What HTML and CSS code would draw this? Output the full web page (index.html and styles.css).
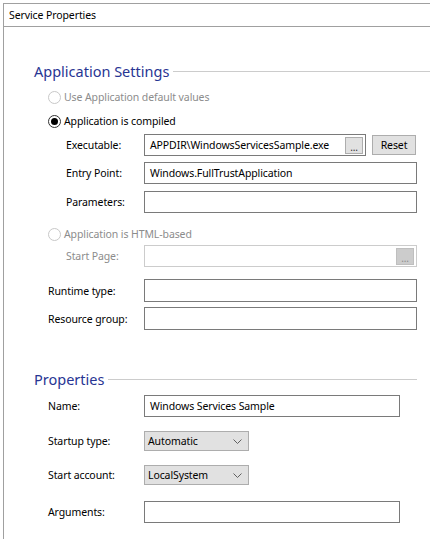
FILE: index.html
```html
<!DOCTYPE html>
<html>
<head>
<meta charset="utf-8">
<link rel="stylesheet" href="styles.css">
</head>
<body>
<div class="panel">
  <div class="panel-title">Service Properties</div>
  <div class="content">
    <div class="section-head h1"><span class="section-title">Application Settings</span><span class="rule"></span></div>

    <div class="row radio-row r-default disabled"><span class="radio"></span><span>Use Application default values</span></div>
    <div class="row radio-row r-compiled"><span class="radio checked"></span><span>Application is compiled</span></div>

    <div class="row field r-exec">
      <span class="label indent">Executable:</span>
      <div class="input exec-input"><span class="value">APPDIR\WindowsServicesSample.exe</span><span class="browse">...</span></div>
      <span class="button reset">Reset</span>
    </div>
    <div class="row field r-entry">
      <span class="label indent">Entry Point:</span>
      <div class="input wide"><span class="value">Windows.FullTrustApplication</span></div>
    </div>
    <div class="row field r-params">
      <span class="label indent">Parameters:</span>
      <div class="input wide"></div>
    </div>

    <div class="row radio-row r-html disabled"><span class="radio"></span><span>Application is HTML-based</span></div>
    <div class="row field r-start disabled">
      <span class="label indent">Start Page:</span>
      <div class="input wide off"><span class="value"></span><span class="browse off">...</span></div>
    </div>

    <div class="row field r-runtime">
      <span class="label">Runtime type:</span>
      <div class="input wide tall"></div>
    </div>
    <div class="row field r-resource">
      <span class="label">Resource group:</span>
      <div class="input wide tall"></div>
    </div>

    <div class="section-head h2"><span class="section-title">Properties</span><span class="rule"></span></div>

    <div class="row field r-name">
      <span class="label">Name:</span>
      <div class="input medium"><span class="value">Windows Services Sample</span></div>
    </div>
    <div class="row field r-startup">
      <span class="label">Startup type:</span>
      <div class="select"><span class="value">Automatic</span><svg class="chev" width="9" height="5" viewBox="0 0 9 5"><path d="M0.5 0.5 L4.5 4.5 L8.5 0.5" fill="none" stroke="#606060" stroke-width="1"/></svg></div>
    </div>
    <div class="row field r-account">
      <span class="label">Start account:</span>
      <div class="select"><span class="value">LocalSystem</span><svg class="chev" width="9" height="5" viewBox="0 0 9 5"><path d="M0.5 0.5 L4.5 4.5 L8.5 0.5" fill="none" stroke="#606060" stroke-width="1"/></svg></div>
    </div>
    <div class="row field r-args">
      <span class="label">Arguments:</span>
      <div class="input medium"></div>
    </div>
  </div>
</div>
</body>
</html>
```
FILE: styles.css
```css
html, body {
  margin: 0;
  padding: 0;
  background: #ffffff;
}
body {
  font-family: "Noto Sans", "DejaVu Sans", sans-serif;
  font-size: 10.5px;
  letter-spacing: -0.1px;
  color: #000000;
  width: 430px;
  height: 539px;
  overflow: hidden;
}
.panel {
  margin: 3px 0 0 3px;
  border-top: 1px solid #a0a0a0;
  border-left: 1px solid #a0a0a0;
  height: 536px;
  box-sizing: border-box;
}
.panel-title {
  height: 22px;
  line-height: 22px;
  padding-left: 5px;
  border-bottom: 1px solid #a0a0a0;
}
.content {
  display: flex;
  flex-direction: column;
}
.section-head {
  display: flex;
  align-items: center;
  height: 18px;
  padding-left: 30px;
}
.section-title {
  color: #283593;
  font-size: 14.5px;
  letter-spacing: 0;
  white-space: nowrap;
}
.rule {
  flex: 1;
  height: 1px;
  background: #cccccc;
  margin-left: 4px;
}
.h1 { margin-top: 35px; }
.h2 { margin-top: 40px; padding-right: 13px; }

.row {
  display: flex;
  align-items: center;
}
.radio-row {
  height: 14px;
  padding-left: 44px;
}
.radio {
  width: 13px;
  height: 13px;
  box-sizing: border-box;
  border: 1px solid #333333;
  border-radius: 50%;
  margin-right: 3px;
  display: flex;
  align-items: center;
  justify-content: center;
  background: #ffffff;
}
.radio.checked::after {
  content: "";
  width: 7px;
  height: 7px;
  border-radius: 50%;
  background: #000000;
}
.disabled { color: #8c8c8c; }
.disabled .radio { border-color: #c8c8c8; }

.field { height: 22px; }
.label {
  width: 96px;
  padding-left: 44px;
  flex: none;
}
.label.indent {
  width: 78px;
  padding-left: 62px;
}
.input {
  box-sizing: border-box;
  height: 22px;
  border: 1px solid #7a7a7a;
  background: #ffffff;
  display: flex;
  align-items: center;
  padding-left: 5px;
  padding-right: 2px;
}
.input .value { flex: 1; white-space: nowrap; }
.input.off { border-color: #cccccc; }
.input.tall { height: 23px; }
.exec-input { width: 222px; }
.wide { width: 273px; }
.medium { width: 256px; }
.browse {
  box-sizing: border-box;
  width: 18px;
  height: 17px;
  border: 1px solid #adadad;
  background: #e1e1e1;
  display: flex;
  align-items: flex-end;
  justify-content: center;
  line-height: 12px;
  font-size: 10px;
  color: #333333;
}
.browse.off {
  background: #cccccc;
  border-color: #bfbfbf;
  color: #8c8c8c;
}
.button {
  box-sizing: border-box;
  border: 1px solid #adadad;
  background: #e1e1e1;
  display: flex;
  align-items: center;
  justify-content: center;
}
.reset {
  width: 44px;
  height: 20px;
  margin-left: 6px;
}
.select {
  box-sizing: border-box;
  width: 105px;
  height: 20px;
  border: 1px solid #adadad;
  background: #e1e1e1;
  display: flex;
  align-items: center;
  padding-left: 3px;
  padding-right: 6px;
}
.select .value { flex: 1; }
.chev { display: block; }

.r-default { margin-top: 10px; }
.r-compiled { margin-top: 10px; }
.r-exec { margin-top: 6px; }
.r-entry { margin-top: 6px; }
.r-params { margin-top: 7px; }
.r-html { margin-top: 14px; }
.r-start { margin-top: 4px; }
.r-runtime { margin-top: 12px; height: 23px; }
.r-resource { margin-top: 5px; height: 23px; }
.r-name { margin-top: 7px; }
.r-startup { margin-top: 14px; height: 20px; }
.r-account { margin-top: 14px; height: 20px; }
.r-args { margin-top: 16px; }
```
